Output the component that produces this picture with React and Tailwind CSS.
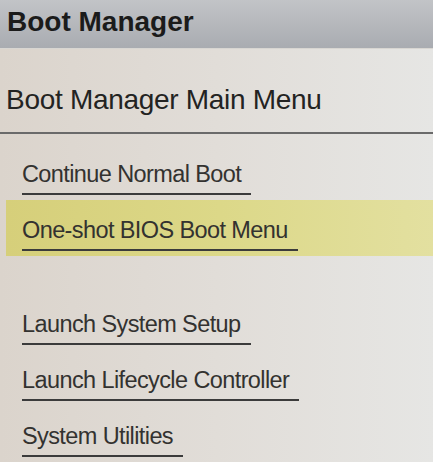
export default function App() {
  const rowCls = "ml-[6px] pl-[16px] h-[56px] flex items-end pb-[5px]";
  const itemCls =
    "inline-block pr-[10px] pb-[5px] border-b-2 border-[#3b3b3b] text-[23.5px] leading-[1.15] tracking-[-0.6px] text-[#333230]";
  return (
    <div
      className="w-[433px] h-[462px] overflow-hidden bg-gradient-to-r from-[#dbd4cc] via-[#e1ddd8] to-[#e6e6e4]"
      style={{ fontFamily: '"Liberation Sans", Arial, sans-serif' }}
    >
      <div className="h-[49px] pl-[7px] pt-[6px] bg-gradient-to-b from-[#c2c4c7] to-[#a9acb1] border-b border-[#d8d6d2]">
        <div className="text-[28px] leading-[1.15] font-bold text-[#1b1b1b]">
          Boot Manager
        </div>
      </div>
      <div className="mt-[35px] pl-[6px] text-[28px] leading-[1.15] text-[#232322] tracking-[-0.3px]">
        Boot Manager Main Menu
      </div>
      <div className="mt-[16px] border-t-2 border-[#6a6a6a]" />
      <div className="mt-[10px] flex flex-col">
        <div className={rowCls}>
          <span className={itemCls}>Continue Normal Boot</span>
        </div>
        <div className={rowCls + " bg-gradient-to-r from-[#d6cf7a] via-[#dcd888] to-[#e3e0a0]"}>
          <span className={itemCls}>One-shot BIOS Boot Menu</span>
        </div>
        <div className="h-[38px]" />
        <div className={rowCls}>
          <span className={itemCls}>Launch System Setup</span>
        </div>
        <div className={rowCls}>
          <span className={itemCls}>Launch Lifecycle Controller</span>
        </div>
        <div className={rowCls}>
          <span className={itemCls}>System Utilities</span>
        </div>
      </div>
    </div>
  );
}
